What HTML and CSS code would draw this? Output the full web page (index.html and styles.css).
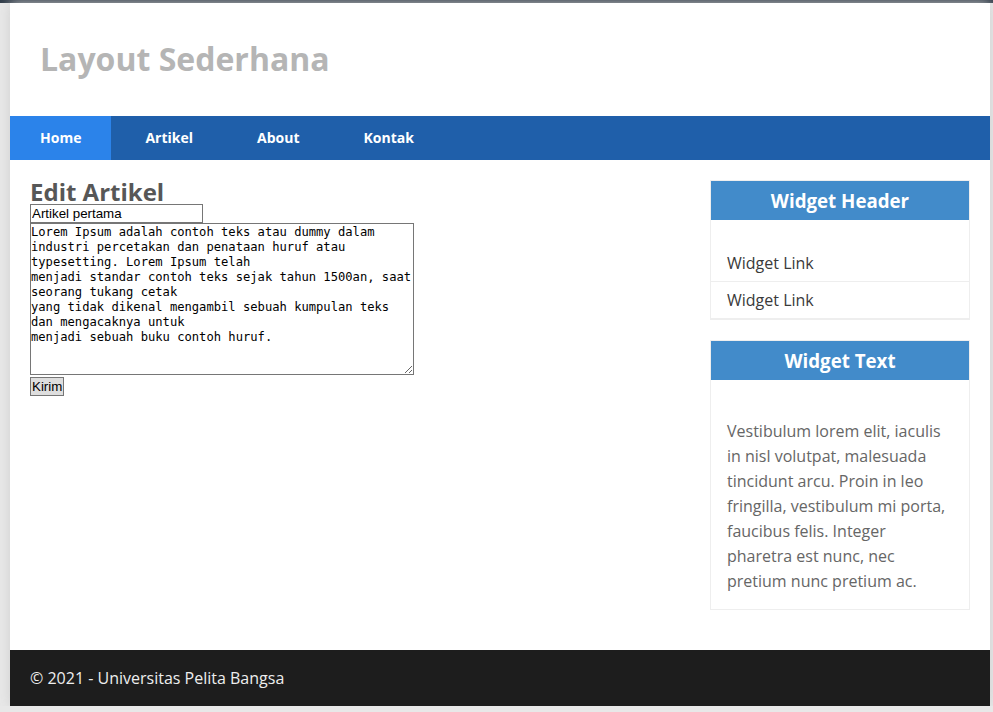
FILE: index.html
```html
<!DOCTYPE html>
<html lang="id">
<head>
<meta charset="utf-8">
<title>Layout Sederhana</title>
<link rel="stylesheet" href="styles.css">
</head>
<body>
<div class="topbar"></div>
<div class="container">
  <header class="site-header">
    <h1 class="site-title">Layout Sederhana</h1>
  </header>
  <nav class="nav">
    <a href="#" class="nav-link active">Home</a>
    <a href="#" class="nav-link">Artikel</a>
    <a href="#" class="nav-link">About</a>
    <a href="#" class="nav-link">Kontak</a>
  </nav>
  <div class="wrapper">
    <main class="main">
      <h2 class="page-title">Edit Artikel</h2>
      <form class="edit-form">
        <input type="text" class="field-title" value="Artikel pertama">
        <textarea class="field-body">Lorem Ipsum adalah contoh teks atau dummy dalam
industri percetakan dan penataan huruf atau
typesetting. Lorem Ipsum telah
menjadi standar contoh teks sejak tahun 1500an, saat
seorang tukang cetak
yang tidak dikenal mengambil sebuah kumpulan teks
dan mengacaknya untuk
menjadi sebuah buku contoh huruf.</textarea>
        <button type="button" class="btn-submit">Kirim</button>
      </form>
    </main>
    <aside class="sidebar">
      <div class="widget">
        <h3 class="widget-title">Widget Header</h3>
        <ul class="widget-list">
          <li class="widget-item"><a href="#" class="widget-link">Widget Link</a></li>
          <li class="widget-item"><a href="#" class="widget-link">Widget Link</a></li>
        </ul>
      </div>
      <div class="widget">
        <h3 class="widget-title">Widget Text</h3>
        <p class="widget-text">Vestibulum lorem elit, iaculis in nisl volutpat, malesuada tincidunt arcu. Proin in leo fringilla, vestibulum mi porta, faucibus felis. Integer pharetra est nunc, nec pretium nunc pretium ac.</p>
      </div>
    </aside>
  </div>
  <footer class="footer">
    <p class="footer-text">&copy; 2021 - Universitas Pelita Bangsa</p>
  </footer>
</div>
</body>
</html>
```

FILE: styles.css
```css
html, body {
  margin: 0;
  padding: 0;
}

body {
  background: #e8e8e8;
  font-family: "Open Sans", "Noto Sans", sans-serif;
  overflow: hidden;
}

.topbar {
  height: 3px;
  background: #2e3a47;
}

.container {
  width: 980px;
  margin: 0 0 0 10px;
  background: #fff;
  box-shadow: 0 0 12px #cfcfcf;
}

.site-header {
  padding: 36px 30px 37px;
}

.site-title {
  margin: 0;
  font-size: 32px;
  line-height: 40px;
  font-weight: 700;
  color: #b5b5b5;
}

.nav {
  display: flex;
  gap: 4px;
  background: #1f5faa;
}

.nav-link {
  display: block;
  padding: 12px 30px;
  font-size: 14px;
  line-height: 20px;
  font-weight: 700;
  color: #fff;
  text-decoration: none;
}

.nav-link.active {
  background: #2b83ea;
}

.wrapper {
  display: flex;
  align-items: flex-start;
}

.main {
  width: 640px;
  padding: 20px;
}

.page-title {
  margin: 0;
  font-size: 24px;
  line-height: 24px;
  font-weight: 700;
  color: #575757;
}

.edit-form {
  margin: 0;
}

.field-title {
  display: block;
  box-sizing: border-box;
  width: 173px;
  height: 19px;
  margin: 0;
  padding: 0 1px;
  border: 1px solid #767676;
  font-family: "Liberation Sans", Arial, sans-serif;
  font-size: 13.333px;
  color: #000;
}

.field-body {
  display: block;
  box-sizing: border-box;
  width: 384px;
  height: 152px;
  margin: 0;
  padding: 1px 0 0 0;
  border: 1px solid #767676;
  font-family: "DejaVu Sans Mono", "Liberation Mono", monospace;
  font-size: 12.15px;
  line-height: 15px;
  color: #000;
  white-space: pre;
  overflow: hidden;
  resize: both;
}

.btn-submit {
  display: block;
  box-sizing: border-box;
  height: 19px;
  margin: 2px 0 0;
  padding: 0 1px;
  border: 1px solid #767676;
  background: #dedede;
  font-family: "Liberation Sans", Arial, sans-serif;
  font-size: 13.333px;
  line-height: 15px;
  color: #000;
}

.sidebar {
  width: 260px;
  padding: 20px;
}

.widget {
  border: 1px solid #eee;
  margin-bottom: 20px;
}

.widget-title {
  margin: 0;
  padding: 10px;
  background: #428bca;
  color: #fff;
  text-align: center;
  font-size: 18.72px;
  line-height: 19px;
  font-weight: 700;
}

.widget-list {
  list-style: none;
  margin: 0;
  padding: 25px 0 0;
}

.widget-item {
  border-bottom: 1px solid #eee;
}

.widget-link {
  display: block;
  padding: 8px 16px;
  font-size: 16px;
  line-height: 20px;
  color: #3a3a3a;
  text-decoration: none;
}

.widget-text {
  margin: 0;
  padding: 39px 16px 15px;
  font-size: 16px;
  line-height: 25px;
  color: #666;
}

.footer {
  background: #1d1d1d;
  padding: 17px 20px;
}

.footer-text {
  margin: 0;
  font-size: 16px;
  line-height: 22px;
  color: #eee;
}
```
